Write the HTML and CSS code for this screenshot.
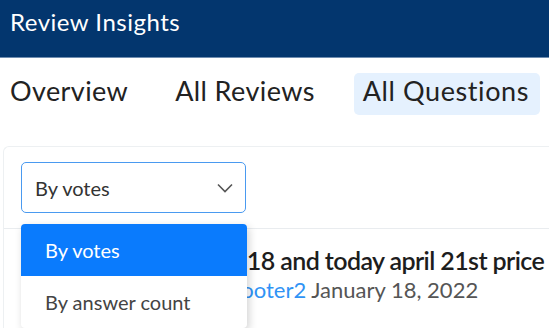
FILE: index.html
```
<!DOCTYPE html>
<html>
    <head>
        <title>Review Insights</title>
        <link rel="stylesheet" href="styles.css">
    </head>
    <body>
        <header class="topbar">Review Insights</header>
        <nav class="tabs">
            <span class="tab">Overview</span>
            <span class="tab">All Reviews</span>
            <span class="tab active">All Questions</span>
        </nav>
        <section class="card">
            <div class="filter">
                <div class="select">
                    <span>By votes</span>
                    <svg width="16" height="10" viewBox="0 0 16 10"><path d="M1 1.5 L8 8.5 L15 1.5" fill="none" stroke="#555" stroke-width="1.6"/></svg>
                </div>
            </div>
            <div class="question">
                <p class="q-title">Prices as of January 18 and today april 21st price difference?</p>
                <p class="q-meta">1 answer. Asked by <a href="#">Scooter2</a> January 18, 2022</p>
                <p class="q-body">It was labeled as the lowest price and sold out in a day, what changed since then</p>
            </div>
            <ul class="menu">
                <li class="selected">By votes</li>
                <li>By answer count</li>
            </ul>
        </section>
    </body>
</html>
```
FILE: styles.css
```
body {
    margin: 0;
    width: 549px;
    height: 328px;
    overflow: hidden;
    font-family: 'Lato', 'Noto Sans', sans-serif;
    color: #222;
    background-color: #FFF;
}

.topbar {
    height: 48px;
    padding: 9px 10px 0;
    background-color: #03366e;
    border-bottom: 1px solid #6f8db0;
    color: #FFF;
    font-size: 24px;
    line-height: 26px;
    letter-spacing: 0.5px;
}

.tabs {
    display: flex;
    align-items: flex-start;
    height: 73px;
    padding: 15px 0 0 10px;
}
.tab {
    font-size: 27px;
    line-height: 36px;
    padding-bottom: 6px;
    letter-spacing: 0.4px;
    color: #222;
}
.tabs .tab:first-child {
    margin-right: 47px;
}
.tabs .tab:nth-child(2) {
    margin-right: 39px;
}
.tab.active {
    padding: 0 11px 6px 9px;
    letter-spacing: 0.6px;
    background-color: #e5f1fe;
    border-radius: 5px;
}

.card {
    position: relative;
    margin-left: 3px;
    border: 1px solid #edf0f2;
    border-right: none;
    border-radius: 6px 0 0 0;
    height: 300px;
}
.filter {
    padding: 15px 17px;
    border-bottom: 1px solid #e9ecef;
}
.select {
    display: flex;
    align-items: center;
    justify-content: space-between;
    box-sizing: border-box;
    width: 225px;
    height: 51px;
    padding: 0 12px 0 13px;
    border: 1px solid #4a9af0;
    border-radius: 5px;
    font-size: 20px;
    color: #333;
}

.question {
    padding: 15px 0 0 25px;
    white-space: nowrap;
}
.question p {
    margin: 0;
}
.q-title {
    padding-left: 9px;
    font-size: 25px;
    line-height: 32px;
    letter-spacing: -0.6px;
    color: #1d1d1d;
    font-weight: 600;
}
.q-meta {
    font-size: 22px;
    line-height: 28px;
    color: #555;
}
.q-meta a {
    color: #2f93f5;
    text-decoration: none;
}
.q-body {
    margin-top: 27px !important;
    font-size: 20px;
    line-height: 28px;
    color: #444;
}

.menu {
    position: absolute;
    top: 77px;
    left: 17px;
    width: 226px;
    margin: 0;
    padding: 0;
    list-style: none;
    background-color: #FFF;
    border-radius: 4px;
    box-shadow: 2px 3px 8px rgba(0, 0, 0, 0.18);
}
.menu li {
    height: 52px;
    padding-left: 24px;
    font-size: 20px;
    line-height: 52px;
    color: #444;
}
.menu li.selected {
    background-color: #0a7bfd;
    color: #FFF;
    border-radius: 4px 4px 0 0;
}
```
